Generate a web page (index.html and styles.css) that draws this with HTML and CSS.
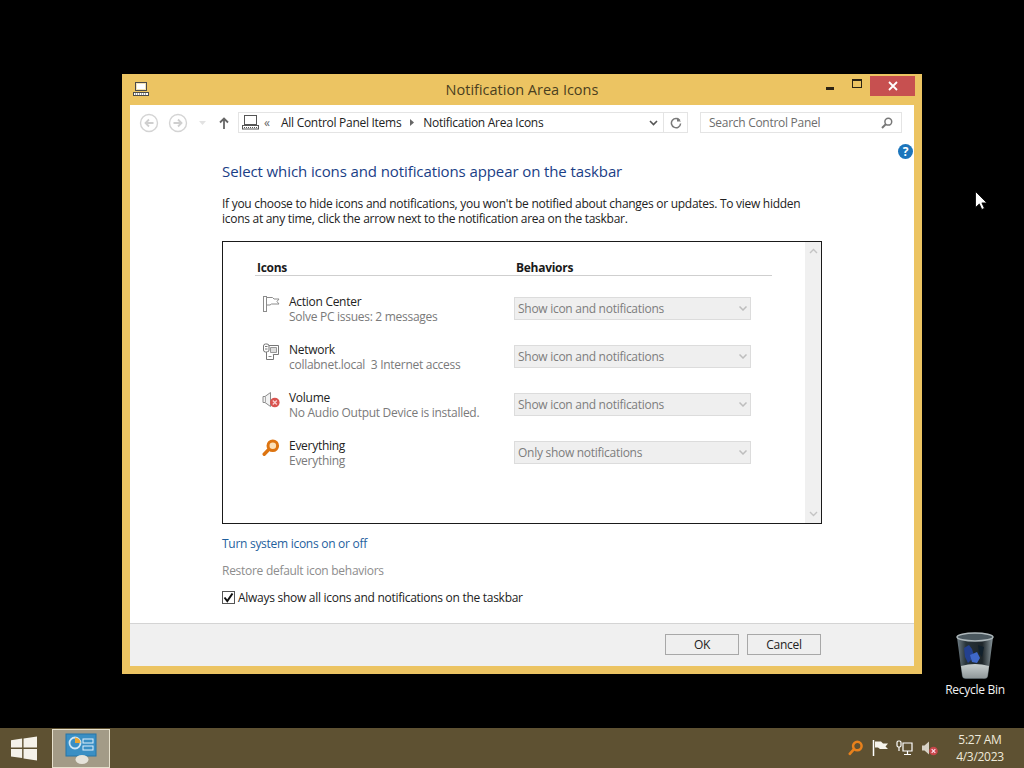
FILE: index.html
```html
<!DOCTYPE html>
<html lang="en">
<head>
    <meta charset="UTF-8">
    <title>Notification Area Icons</title>
    <link rel="stylesheet" href="styles.css">
</head>
<body>
    <div class="desktop">
        <div class="window">
            <div class="titlebar">
                <svg class="title-icon" width="18" height="16" viewBox="0 0 18 16"><rect x="3.500" y="1.500" width="11" height="8" fill="#f4e3b4" stroke="#4a4a4a"/><rect x="5" y="3" width="8" height="5" fill="#fff"/><rect x="1.500" y="11.500" width="15" height="3" fill="#fff" stroke="#4a4a4a"/><path d="M3 13h1M5 13h1M7 13h1M9 13h1M11 13h1M13 13h1" stroke="#4a4a4a"/></svg>
                <div class="title">Notification Area Icons</div>
                <div class="caption-btns">
                    <div class="cap-btn"><span class="cap-min"></span></div>
                    <div class="cap-btn"><span class="cap-max"></span></div>
                    <div class="cap-close">
                        <svg width="10" height="10" viewBox="0 0 10 10"><path d="M1 1l8 8M9 1l-8 8" stroke="#fff" stroke-width="1.800"/></svg>
                    </div>
                </div>
            </div>
            <div class="client">
                <div class="toolbar">
                    <svg class="nav-icon" width="20" height="20" viewBox="0 0 20 20"><circle cx="10" cy="10" r="8.500" fill="#fff" stroke="#d4d4d4" stroke-width="1.400"/><path d="M14.500 10H6.500M10 6.500L6.500 10l3.500 3.500" fill="none" stroke="#cfcfcf" stroke-width="1.800"/></svg>
                    <svg class="nav-icon nav-next" width="20" height="20" viewBox="0 0 20 20"><circle cx="10" cy="10" r="8.500" fill="#fff" stroke="#d4d4d4" stroke-width="1.400"/><path d="M5.500 10h8M10 6.500l3.500 3.500-3.500 3.500" fill="none" stroke="#cfcfcf" stroke-width="1.800"/></svg>
                    <svg class="nav-drop" width="7" height="4" viewBox="0 0 7 4"><path d="M0 0h7L3.500 4z" fill="#e2e2e2"/></svg>
                    <svg class="nav-up" width="10" height="12" viewBox="0 0 10 12"><path d="M5 12V1.500M1 5.500l4-4 4 4" fill="none" stroke="#666" stroke-width="1.800"/></svg>
                    <div class="address">
                        <svg class="addr-icon" width="17" height="15" viewBox="0 0 17 15"><rect x="2.500" y="0.500" width="12" height="9" fill="#fff" stroke="#555"/><rect x="0.500" y="10.500" width="16" height="3.500" fill="#fff" stroke="#555"/><path d="M2 12.500h1M4 12.500h1M6 12.500h1M8 12.500h1M10 12.500h1M12 12.500h1M14 12.500h1" stroke="#555"/></svg>
                        <span class="addr-more">&laquo;</span>
                        <span class="crumb">All Control Panel Items</span>
                        <svg class="crumb-sep" width="4" height="7" viewBox="0 0 4 7"><path d="M0 0l4 3.500L0 7z" fill="#666"/></svg>
                        <span class="crumb">Notification Area Icons</span>
                        <svg class="addr-drop" width="9" height="6" viewBox="0 0 9 6"><path d="M1 1l3.500 3.500L8 1" fill="none" stroke="#555" stroke-width="1.600"/></svg>
                        <div class="addr-refresh">
                            <svg width="12" height="12" viewBox="0 0 12 12"><path d="M9.800 3.500A4.600 4.600 0 1 0 10.600 6.500" fill="none" stroke="#7a7a7a" stroke-width="1.500"/><path d="M7 .500v4h4z" fill="#7a7a7a"/></svg>
                        </div>
                    </div>
                    <div class="search">
                        <span>Search Control Panel</span>
                        <svg width="12" height="12" viewBox="0 0 12 12"><circle cx="7.300" cy="4.700" r="3.400" fill="none" stroke="#777" stroke-width="1.500"/><path d="M5 7L1 11" stroke="#777" stroke-width="2"/></svg>
                    </div>
                </div>
                <div class="help-row">
                    <div class="help">?</div>
                </div>
                <div class="content">
                    <h1>Select which icons and notifications appear on the taskbar</h1>
                    <p class="intro">If you choose to hide icons and notifications, you won't be notified about changes or updates. To view hidden<br>icons at any time, click the arrow next to the notification area on the taskbar.</p>
                    <div class="icon-box">
                        <div class="icon-list">
                            <div class="list-head">
                                <div class="col-icons">Icons</div>
                                <div>Behaviors</div>
                            </div>
                            <div class="item">
                                <svg class="item-icon" width="18" height="18" viewBox="0 0 18 18"><rect x="1.500" y="1.500" width="3" height="15" fill="#fff" stroke="#8c8c8c"/><path d="M4.500 2.500h6l1.500 1.500h5l-2 2.500 2 2.500H9.500L8 10H4.500z" fill="#fff" stroke="#8c8c8c"/></svg>
                                <div class="item-text">
                                    <div class="item-name">Action Center</div>
                                    <div class="item-sub">Solve PC issues: 2 messages</div>
                                </div>
                                <div class="select"><span>Show icon and notifications</span><svg width="8" height="5" viewBox="0 0 8 5"><path d="M.5.500L4 4 7.500.500" fill="none" stroke="#bdbdbd" stroke-width="1.500"/></svg></div>
                            </div>
                            <div class="item">
                                <svg class="item-icon" width="18" height="18" viewBox="0 0 18 18"><path d="M6.500 2.500h10v9h-8" fill="#fff" stroke="#777"/><rect x="1.500" y="1" width="5.500" height="8" rx="2" fill="#fff" stroke="#777"/><path d="M3 3.500h2.500M3 6h2.500" stroke="#777"/><path d="M8.500 4.500h6v5h-6z" fill="#ddd" stroke="#999"/><path d="M4.500 9v7.500h7v-5" fill="#fff" stroke="#777"/><path d="M6.500 13.500h3" stroke="#888"/></svg>
                                <div class="item-text">
                                    <div class="item-name">Network</div>
                                    <div class="item-sub">collabnet.local&nbsp; 3 Internet access</div>
                                </div>
                                <div class="select"><span>Show icon and notifications</span><svg width="8" height="5" viewBox="0 0 8 5"><path d="M.5.500L4 4 7.500.500" fill="none" stroke="#bdbdbd" stroke-width="1.500"/></svg></div>
                            </div>
                            <div class="item">
                                <svg class="item-icon" width="18" height="18" viewBox="0 0 18 18"><path d="M1 5.500h2L8.500 1.500v14L3 11.500H1z" fill="#f2f2f2" stroke="#8c8c8c"/><path d="M3.500 5.500v6" stroke="#aaa"/><circle cx="12.800" cy="11.500" r="4.800" fill="#d9534f"/><path d="M10.800 9.500l4 4M14.800 9.500l-4 4" stroke="#f8d0d0" stroke-width="1.300"/></svg>
                                <div class="item-text">
                                    <div class="item-name">Volume</div>
                                    <div class="item-sub">No Audio Output Device is installed.</div>
                                </div>
                                <div class="select"><span>Show icon and notifications</span><svg width="8" height="5" viewBox="0 0 8 5"><path d="M.5.500L4 4 7.500.500" fill="none" stroke="#bdbdbd" stroke-width="1.500"/></svg></div>
                            </div>
                            <div class="item">
                                <svg class="item-icon" width="18" height="18" viewBox="0 0 18 18"><circle cx="10.800" cy="6.800" r="4.800" fill="#fbe0b8" stroke="#dd7411" stroke-width="3"/><path d="M6.500 10.800L2.200 15.200" stroke="#dd7411" stroke-width="3.400" stroke-linecap="round"/></svg>
                                <div class="item-text">
                                    <div class="item-name">Everything</div>
                                    <div class="item-sub">Everything</div>
                                </div>
                                <div class="select"><span>Only show notifications</span><svg width="8" height="5" viewBox="0 0 8 5"><path d="M.5.500L4 4 7.500.500" fill="none" stroke="#bdbdbd" stroke-width="1.500"/></svg></div>
                            </div>
                        </div>
                        <div class="scrollbar">
                            <svg width="9" height="6" viewBox="0 0 9 6"><path d="M1 5l3.500-3.500L8 5" fill="none" stroke="#c4c4c4" stroke-width="1.400"/></svg>
                            <svg width="9" height="6" viewBox="0 0 9 6"><path d="M1 1l3.500 3.500L8 1" fill="none" stroke="#c4c4c4" stroke-width="1.400"/></svg>
                        </div>
                    </div>
                    <div class="link">Turn system icons on or off</div>
                    <div class="link-off">Restore default icon behaviors</div>
                    <div class="check-row">
                        <div class="checkbox">
                            <svg width="11" height="11" viewBox="0 0 11 11"><path d="M1.500 5.500l2.800 3.500L9.500 1.500" fill="none" stroke="#111" stroke-width="2"/></svg>
                        </div>
                        <span>Always show all icons and notifications on the taskbar</span>
                    </div>
                </div>
                <div class="footer">
                    <div class="button">OK</div>
                    <div class="button">Cancel</div>
                </div>
            </div>
        </div>

        <div class="recycle">
            <svg width="38" height="48" viewBox="0 0 38 48">
                <defs>
                    <linearGradient id="binBody" x1="0" x2="1" y1="0" y2="0">
                        <stop offset="0" stop-color="#6f7d84"/>
                        <stop offset=".25" stop-color="#27333a"/>
                        <stop offset=".7" stop-color="#1d2529"/>
                        <stop offset="1" stop-color="#8a979c"/>
                    </linearGradient>
                    <linearGradient id="binBase" x1="0" x2="0" y1="0" y2="1">
                        <stop offset="0" stop-color="#c9d0d0"/>
                        <stop offset="1" stop-color="#8e9698"/>
                    </linearGradient>
                </defs>
                <path d="M1 5l5 39q.5 3 4 3h18q3.500 0 4-3l5-39z" fill="url(#binBody)"/>
                <path d="M5 34q14-4 28 0l-1.500 10q-.5 2.500-3.500 2.500H10q-3 0-3.500-2.500z" fill="url(#binBase)"/>
                <path d="M8 16l5-3 3 4 2 7-3 4-3 3-3-6z" fill="#23408f"/>
                <path d="M14 23l7-3 3 6-3 5-5-1z" fill="#3f68c9"/>
                <path d="M22 13l6 2-2 10-3-4z" fill="#10202c"/>
                <ellipse cx="19" cy="5" rx="18" ry="4" fill="#4b585f" stroke="#aeb8bb" stroke-width="1.500"/>
            </svg>
            <div>Recycle Bin</div>
        </div>

        <svg class="cursor" width="12" height="19" viewBox="0 0 12 19"><path d="M.5.500v16l3.800-3.600 2.500 5.600 2.600-1.200-2.500-5.400h5z" fill="#fff" stroke="#000" stroke-width=".8"/></svg>
    </div>

    <div class="taskbar">
        <div class="start">
            <svg width="26" height="25" viewBox="0 0 28 26"><path d="M0 4l12-1.700V12H0zM13.500 2.100L28 0v12H13.500zM0 13.500h12v9.700L0 21.500zM13.500 13.500H28V26l-14.500-2.100z" fill="#f5f2ea"/></svg>
        </div>
        <div class="task-btn">
            <svg width="34" height="34" viewBox="0 0 34 34"><rect x="2" y="3" width="30" height="22" fill="#3a8fc4" stroke="#2474a8"/><circle cx="11" cy="12" r="5.500" fill="none" stroke="#cfe6f5" stroke-width="1.800"/><path d="M11 6.500a5.500 5.500 0 0 1 5.500 5.500H11z" fill="#eba531"/><rect x="19" y="8" width="10" height="4" fill="none" stroke="#dff0fb"/><rect x="19" y="15" width="10" height="4" fill="none" stroke="#dff0fb"/><ellipse cx="18" cy="28.500" rx="6.500" ry="4.500" fill="#e6e3da"/></svg>
        </div>
        <div class="tray">
            <svg width="16" height="16" viewBox="0 0 18 18"><circle cx="10.500" cy="6.800" r="4.800" fill="none" stroke="#e8811c" stroke-width="2.800"/><path d="M6.500 10.500L2 15.500" stroke="#e8811c" stroke-width="3" stroke-linecap="round"/></svg>
            <svg width="16" height="16" viewBox="0 0 16 16"><path d="M1.500 0v16" stroke="#fff" stroke-width="1.500"/><path d="M3 1.500h6L11 3.500h5L13.500 6.500 16 9H8L6 7.500H3z" fill="#f6f4ec"/></svg>
            <svg width="17" height="16" viewBox="0 0 17 16"><rect x="1" y="1" width="4" height="6" rx="1.500" fill="none" stroke="#fff" stroke-width="1.200"/><path d="M3 7v4M7 3h9v8H7zM11.500 11v3M8 14.500h7" fill="none" stroke="#fff" stroke-width="1.200"/></svg>
            <svg width="18" height="16" viewBox="0 0 18 16"><path d="M1 5.500h2.500L8 1.500v13l-4.500-4H1z" fill="#d7d2c6"/><circle cx="12.500" cy="11" r="4.300" fill="#c9474b"/><path d="M10.700 9.200l3.600 3.600M14.300 9.200l-3.600 3.600" stroke="#fde" stroke-width="1.200"/></svg>
        </div>
        <div class="clock">
            <div>5:27 AM</div>
            <div>4/3/2023</div>
        </div>
    </div>
</body>
</html>
```

FILE: styles.css
```css
* {
    margin: 0;
    padding: 0;
    box-sizing: border-box;
}

body {
    width: 1024px;
    height: 768px;
    overflow: hidden;
    display: flex;
    flex-direction: column;
    background: #000;
    font-family: "Open Sans", "Noto Sans", sans-serif;
    font-size: 12px;
    letter-spacing: -0.28px;
    line-height: 15px;
    color: #2b2b2b;
}

.desktop {
    position: relative;
    height: 728px;
}

.window {
    position: absolute;
    left: 122px;
    top: 74px;
    width: 800px;
    height: 600px;
    display: flex;
    flex-direction: column;
    background: #ecc462;
    padding: 0 8px 8px;
}

.titlebar {
    position: relative;
    height: 31px;
    display: flex;
    justify-content: center;
    flex-shrink: 0;
}

.title-icon {
    position: absolute;
    left: 2px;
    top: 7px;
}

.title {
    font-size: 14.5px;
    line-height: 31px;
    color: #4a3f20;
    letter-spacing: 0;
}

.caption-btns {
    position: absolute;
    right: -1px;
    top: 2px;
    display: flex;
}

.cap-btn {
    width: 27px;
    height: 18px;
    display: flex;
    align-items: center;
    justify-content: center;
}

.cap-min {
    width: 8px;
    height: 3px;
    margin-top: 7px;
    background: #2c2414;
}

.cap-max {
    width: 10px;
    height: 9px;
    margin-top: -3px;
    border: 1px solid #2c2414;
    border-top-width: 2px;
}

.cap-close {
    width: 45px;
    height: 20px;
    display: flex;
    align-items: center;
    justify-content: center;
    background: #c75050;
}

.client {
    flex: 1;
    display: flex;
    flex-direction: column;
    background: #fff;
}

.toolbar {
    display: flex;
    align-items: center;
    height: 21px;
    margin-top: 7px;
    flex-shrink: 0;
}

.nav-icon {
    margin-left: 9px;
}

.nav-next {
    margin-left: 9px;
}

.nav-drop {
    margin-left: 11px;
}

.nav-up {
    margin-left: 13px;
}

.address {
    display: flex;
    align-items: center;
    width: 450px;
    height: 21px;
    margin-left: 9px;
    border: 1px solid #e4e4e4;
}

.addr-icon {
    margin-left: 3px;
}

.addr-more {
    margin-left: 5px;
    width: 17px;
    color: #666;
}

.crumb {
    color: #222;
}

.crumb-sep {
    margin: 0 9px 0 9px;
}

.addr-drop {
    margin-left: auto;
    margin-right: 5px;
}

.addr-refresh {
    width: 24px;
    height: 19px;
    display: flex;
    align-items: center;
    justify-content: center;
    border-left: 1px solid #e4e4e4;
}

.search {
    display: flex;
    align-items: center;
    justify-content: space-between;
    width: 202px;
    height: 21px;
    margin-left: 12px;
    padding: 0 8px;
    border: 1px solid #e4e4e4;
    color: #6d6d6d;
}

.help-row {
    display: flex;
    justify-content: flex-end;
    height: 18px;
    margin-top: 10px;
    padding-top: 1px;
    flex-shrink: 0;
}

.help {
    width: 15px;
    height: 15px;
    margin-right: 1px;
    border-radius: 50%;
    background: #1c75bc;
    color: #fff;
    font-size: 12px;
    font-weight: 700;
    line-height: 15px;
    text-align: center;
}

.content {
    flex: 1;
    padding-left: 92px;
}

h1 {
    font-size: 15px;
    font-weight: 400;
    line-height: 20px;
    letter-spacing: -0.1px;
    color: #1a3e86;
}

.intro {
    margin-top: 15px;
    color: #222;
}

.icon-box {
    display: flex;
    width: 600px;
    height: 283px;
    margin-top: 15px;
    border: 1px solid #1a1a1a;
}

.icon-list {
    flex: 1;
    padding: 18px 0 0 32px;
}

.list-head {
    display: flex;
    width: 517px;
    height: 16px;
    padding-left: 2px;
    border-bottom: 1px solid #cfcfcf;
    font-weight: 700;
    color: #1a1a1a;
}

.col-icons {
    width: 259px;
}

.item {
    display: flex;
    height: 48px;
    padding-left: 7px;
}

.list-head + .item {
    margin-top: 18px;
}

.item-icon {
    margin: 1px 9px 0 0;
}

.item-text {
    width: 225px;
}

.item-name {
    color: #222;
}

.item-sub {
    color: #7a7a7a;
}

.select {
    display: flex;
    align-items: center;
    justify-content: space-between;
    width: 237px;
    height: 23px;
    margin-top: 3px;
    padding: 0 3px;
    background: #efefef;
    border: 1px solid #dcdcdc;
    color: #7d7d7d;
}

.scrollbar {
    display: flex;
    flex-direction: column;
    align-items: center;
    justify-content: space-between;
    width: 16px;
    padding: 6px 0;
    background: #f0f0f0;
}

.link {
    margin-top: 12px;
    color: #1f5f9e;
}

.link-off {
    margin-top: 12px;
    color: #8d8d8d;
}

.check-row {
    display: flex;
    align-items: center;
    gap: 3px;
    margin-top: 12px;
    color: #222;
}

.checkbox {
    width: 13px;
    height: 13px;
    display: flex;
    align-items: center;
    justify-content: center;
    border: 1px solid #555;
}

.footer {
    display: flex;
    gap: 8px;
    height: 43px;
    padding: 10px 0 0 535px;
    background: #f0f0f0;
    border-top: 1px solid #d4d4d4;
    flex-shrink: 0;
}

.button {
    width: 74px;
    height: 21px;
    background: #efefef;
    border: 1px solid #a8a8a8;
    text-align: center;
    line-height: 20px;
    color: #222;
}

.recycle {
    position: absolute;
    left: 935px;
    top: 632px;
    width: 80px;
    display: flex;
    flex-direction: column;
    align-items: center;
    gap: 2px;
    color: #f2f2f2;
}

.cursor {
    position: absolute;
    left: 975px;
    top: 191px;
}

.taskbar {
    height: 40px;
    display: flex;
    align-items: center;
    background: #5e5132;
}

.start {
    width: 48px;
    display: flex;
    justify-content: center;
}

.task-btn {
    width: 58px;
    height: 39px;
    margin-left: 4px;
    display: flex;
    align-items: center;
    justify-content: center;
    background: #a39b87;
    border: 1px solid #e6e0cc;
}

.tray {
    display: flex;
    align-items: center;
    gap: 8px;
    margin-left: auto;
}

.clock {
    width: 72px;
    margin: 0 8px 0 5px;
    text-align: center;
    color: #eee9da;
    line-height: 17px;
}
```
